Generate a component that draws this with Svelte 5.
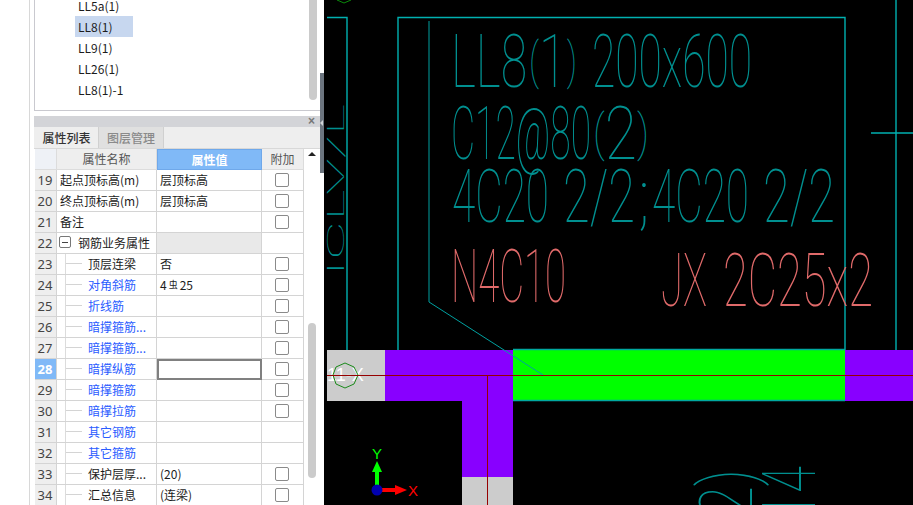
<script>
  const items = [
    { t: 'LL5a(1)' }, { t: 'LL8(1)', sel: true }, { t: 'LL9(1)' }, { t: 'LL26(1)' }, { t: 'LL8(1)-1' }
  ];
  const rows = [
    { n: 19, name: '起点顶标高(m)', val: '层顶标高', cb: true },
    { n: 20, name: '终点顶标高(m)', val: '层顶标高', cb: true },
    { n: 21, name: '备注', val: '', cb: true },
    { n: 22, name: '钢筋业务属性', val: '', group: true },
    { n: 23, name: '顶层连梁', val: '否', cb: true, tree: true },
    { n: 24, name: '对角斜筋', val: '4虫25', cb: true, tree: true, link: true, steel: true },
    { n: 25, name: '折线筋', val: '', cb: true, tree: true, link: true },
    { n: 26, name: '暗撑箍筋...', val: '', cb: true, tree: true, link: true },
    { n: 27, name: '暗撑箍筋...', val: '', cb: true, tree: true, link: true },
    { n: 28, name: '暗撑纵筋', val: '', cb: true, tree: true, link: true, active: true },
    { n: 29, name: '暗撑箍筋', val: '', cb: true, tree: true, link: true },
    { n: 30, name: '暗撑拉筋', val: '', cb: true, tree: true, link: true },
    { n: 31, name: '其它钢筋', val: '', tree: true, link: true },
    { n: 32, name: '其它箍筋', val: '', tree: true, link: true },
    { n: 33, name: '保护层厚...', val: '(20)', cb: true, tree: true },
    { n: 34, name: '汇总信息', val: '(连梁)', cb: true, tree: true }
  ];
  const frame = [
    'M327 17.5H347V350', 'M398 350V17.5H845V350', 'M896 0V350', 'M871 133H913'
  ];
  // Runs of CAD text: brackets are set smaller and lifted so they stay within cap height.
  const runs = (s) => {
    let shifted = false;
    return s.split(/([()])/).filter(Boolean).map((t) => {
      const paren = t === '(' || t === ')';
      const dy = paren ? (shifted ? 0 : -9) : (shifted ? 9 : 0);
      shifted = paren;
      return { t, paren, dy };
    });
  };
  const cadTeal = [
    { t: 'LL8', x: 451, y: 87, w: 76 },
    { t: '(1)', x: 529, y: 87, w: 48 },
    { t: '200x600', x: 592, y: 87, w: 160 },
    { t: 'C12@80', x: 451, y: 159, w: 140 },
    { t: '(2)', x: 593, y: 159, w: 56 },
    { t: '4C20', x: 452, y: 222, w: 97 },
    { t: '2/2', x: 563, y: 222, w: 72 },
    { t: ';', x: 638, y: 222, w: 12 },
    { t: '4C20', x: 652, y: 222, w: 97 },
    { t: '2/2', x: 763, y: 222, w: 72 }
  ];
  const cadRed = [
    { t: 'N4C10', x: 451, y: 302, w: 115 },
    { t: 'JX', x: 661, y: 306, w: 46 },
    { t: '2C25x2', x: 723, y: 306, w: 150 }
  ];
</script>

<div class="app">
  <div class="rail"></div>
  <div class="panel">
    <div class="listbox">
      <div class="list">
        {#each items as it}
          <div class="item"><span class:sel={it.sel}>{it.t}</span></div>
        {/each}
      </div>
      <div class="listbar"><div class="listthumb"></div></div>
    </div>
    <div class="titlebar"><span class="close">×</span></div>
    <div class="tabs">
      <div class="tab on">属性列表</div>
      <div class="tab off">图层管理</div>
    </div>
    <div class="gridwrap">
      <div class="table">
        <div class="row head">
          <div class="c num"></div>
          <div class="c name">属性名称</div>
          <div class="c val">属性值</div>
          <div class="c add">附加</div>
        </div>
        {#each rows as r}
          <div class="row">
            <div class="c num" class:active={r.active}>{r.n}</div>
            <div class="c name" class:link={r.link} class:group={r.group} class:tree={r.tree}>
              {#if r.tree}<span class="guide"><i></i></span>{/if}
              {#if r.group}<span class="minus"><i></i></span>{/if}
              <span>{r.name}</span>
            </div>
            <div class="c val" class:grey={r.group} class:edit={r.active}>
              {#if r.steel}4<span class="steel">虫</span>25{:else}{r.val}{/if}
            </div>
            <div class="c add">{#if r.cb}<span class="cb"></span>{/if}</div>
          </div>
        {/each}
      </div>
      <div class="vbar">
        <div class="arrow"></div>
        <div class="thumb"></div>
      </div>
    </div>
  </div>
  <div class="splitter"><div class="handle"><i></i></div></div>

  <svg class="cad" viewBox="324 0 589 505" width="589" height="505">
    <rect x="324" y="0" width="589" height="505" fill="#000" />
    <polygon points="344,3 351,0 354,-6 334,-6 337,0" fill="none" stroke="#0a8a0a" />

    <g fill="none" stroke="#00b0b0" stroke-width="1.4">
      {#each frame as d}<path {d} />{/each}
    </g>

    <g class="stroke-text teal">
      {#each cadTeal as c}
        <text x={c.x} y={c.y} textLength={c.w} lengthAdjust="spacingAndGlyphs">{#each runs(c.t) as r}<tspan class:paren={r.paren} dy={r.dy}>{r.t}</tspan>{/each}</text>
      {/each}
      <text class="small" transform="translate(344 276) rotate(-90)" textLength="172" lengthAdjust="spacingAndGlyphs">ICLV/L</text>
      <text transform="translate(752 517) rotate(-90)" textLength="48" lengthAdjust="spacingAndGlyphs">2)</text>
      <text transform="translate(815 520) rotate(-90)" textLength="54" lengthAdjust="spacingAndGlyphs">14</text>
    </g>
    <g class="stroke-text red">
      {#each cadRed as c}
        <text x={c.x} y={c.y} textLength={c.w} lengthAdjust="spacingAndGlyphs">{c.t}</text>
      {/each}
    </g>

    <rect x="327" y="350" width="58" height="51" fill="#cccccc" />
    <path d="M385 350H513V477H462V401H385Z" fill="#8800ff" />
    <rect x="462" y="477" width="51" height="28" fill="#cccccc" />
    <rect x="513" y="350" width="332" height="51" fill="#00ff00" />
    <rect x="845" y="350" width="68" height="51" fill="#8800ff" />
    <path d="M513 349.5H845M513 400.5H845" stroke="#00a8a0" stroke-width="1.4" fill="none" />
    <path d="M429 21V302L543 375" fill="none" stroke="#00a0a0" stroke-width="1" />
    <text x="327" y="381" class="axis-name">11-X</text>
    <polygon points="345,363 354,367 358,375 354,384 345,388 336,384 333,375 336,367" fill="none" stroke="#1a8a1a" />
    <path d="M327 375.5H913M487.5 375.5V505" stroke="#960000" fill="none" />

    <rect x="375" y="471" width="4" height="16" fill="#00ff00" />
    <polygon points="377,461 382,472 372,472" fill="#00ff00" />
    <rect x="382" y="488" width="14" height="4" fill="#ff0000" />
    <polygon points="407,490 395,485 395,495" fill="#ff0000" />
    <circle cx="377" cy="490" r="5.5" fill="#0000b0" />
    <text x="372" y="459" class="axis" fill="#00ff00">Y</text>
    <text x="408" y="496" class="axis" fill="#ff0000">X</text>
  </svg>
</div>

<style>
  :global(body) { margin: 0; background: #fff; }
  .app {
    display: flex;
    width: 913px;
    height: 505px;
    overflow: hidden;
    font-family: "Noto Sans CJK SC", "Noto Sans", sans-serif;
    font-size: 12px;
    color: #1c1c1c;
    background: #fff;
  }
  .rail { width: 29px; flex: none; border-right: 1px solid #d8d8d8; }
  .panel {
    width: 286px;
    margin-left: 4px;
    flex: none;
    display: flex;
    flex-direction: column;
    box-sizing: border-box;
  }
  .listbox {
    height: 111px;
    flex: none;
    box-sizing: border-box;
    border: 1px solid #c9c9cf;
    border-top: 0;
    border-right: 0;
    display: flex;
    overflow: hidden;
  }
  .list { flex: 1; margin-top: -5px; padding-left: 40px; }
  .item { height: 21px; line-height: 21px; }
  .item span { display: inline-block; height: 21px; padding: 0 3px; }
  .item .sel { background: #c7d7ef; width: 52px; }
  .listbar { width: 11px; flex: none; }
  .listthumb { width: 8px; height: 100px; background: #cbcbcb; border-radius: 0 0 4px 4px; }
  .titlebar {
    margin-top: 5px;
    height: 11px;
    background: #d3d4d8;
    display: flex;
    justify-content: flex-end;
    align-items: center;
    padding-right: 5px;
  }
  .close { color: #777; font-size: 12px; line-height: 11px; font-family: "Liberation Sans", sans-serif; font-weight: 700; }
  .tabs { height: 22px; display: flex; background: #eee; border-bottom: 1px solid #d8d8d8; box-sizing: border-box; flex: none; }
  .tab { width: 64px; text-align: center; line-height: 21px; border-right: 1px solid #d0d0d0; margin-left: 1px; box-sizing: border-box; }
  .tab.on { font-weight: 500; color: #333; }
  .tab.off { background: #e0e0e0; color: #8a8a8a; font-weight: 500; margin-left: 0; width: 65px; }
  .gridwrap { display: flex; flex: none; }
  .table { width: 270px; flex: none; }
  .row { display: grid; grid-template-columns: 22px 100px 105px 42px; height: 21px; margin-left: 1px; }
  .c { box-sizing: border-box; border-right: 1px solid #d4d4d4; border-bottom: 1px solid #d4d4d4; line-height: 20px; white-space: nowrap; overflow: hidden; }
  .num { background: #eeeeee; text-align: center; font-size: 13px; color: #444; border-right: 1px solid #d4d4d4; font-family: "Noto Sans", sans-serif; padding-right: 1px; }
  .num.active { background: #80b9f7; color: #fff; font-weight: 700; }
  .name { padding-left: 3px; display: flex; }
  .name.tree { padding-left: 0; }
  .name.link { color: #2a5cff; }
  .name.group { padding-left: 2px; }
  .guide { width: 23px; flex: none; box-sizing: border-box; margin-left: 8px; border-left: 1px solid #dcdcdc; height: 21px; display: flex; align-items: center; }
  .guide i { width: 16px; height: 1px; background: #d4d4d4; margin-top: -2px; }
  .minus { width: 12px; height: 12px; box-sizing: border-box; border: 1px solid #777; border-radius: 2px; margin: 3px 7px 0 0; display: flex; align-items: center; justify-content: center; flex: none; }
  .minus i { width: 6px; height: 1px; background: #444; }
  .val { padding-left: 3px; }
  .val.grey { background: #e9e9e9; }
  .val.edit { border: 2px solid #808080; background: #fff; }
  .steel { font-size: 9px; position: relative; top: -2px; margin: 0 2px 0 2px; }
  .add { display: flex; justify-content: center; padding: 3px 2px 0 0; }
  .cb { width: 14px; height: 14px; box-sizing: border-box; border: 1px solid #8a8a8a; border-radius: 2px; background: #fff; }
  .head { height: 21px; }
  .head .c { background: #eee; text-align: center; color: #555; border-color: #dcdcdc; line-height: 20px; }
  .head .name { display: block; padding: 0; }
  .head .num { background: #eef1f6; }
  .head .val { background: #80b9f7; color: #fff; font-weight: 700; border: 1px solid #6fa8ea; padding-left: 0; }
  .head .add { display: block; padding: 0; }
  .vbar { flex: 1; padding-left: 4px; }
  .arrow { width: 0; height: 0; border-left: 4px solid transparent; border-right: 4px solid transparent; border-bottom: 4px solid #222; margin: 3px 0 0 0; }
  .thumb { width: 8px; height: 155px; margin-top: 167px; background: #cbcbcb; border-radius: 4px; }
  .splitter { width: 4px; flex: none; padding-top: 73px; box-sizing: border-box; }
  .handle { height: 100px; background: #6c757f; position: relative; }
  .handle i { position: absolute; top: 47px; left: 0; width: 0; height: 0; border-top: 3px solid transparent; border-bottom: 3px solid transparent; border-right: 3px solid #d0d3d6; }
  .cad { display: block; flex: none; }
  .stroke-text text { font-family: Roboto, "Liberation Sans", sans-serif; font-weight: 100; font-size: 74px; }
  .stroke-text text.small { font-size: 24px; }
  .stroke-text .paren { font-size: 50px; }
  .teal text { fill: #008f8f; }
  .red text { fill: #e06a6a; }
  .axis { font-family: "Liberation Sans", sans-serif; font-size: 15px; }
  .axis-name { font-family: "Liberation Sans", sans-serif; font-size: 18px; fill: #fff; }
</style>
